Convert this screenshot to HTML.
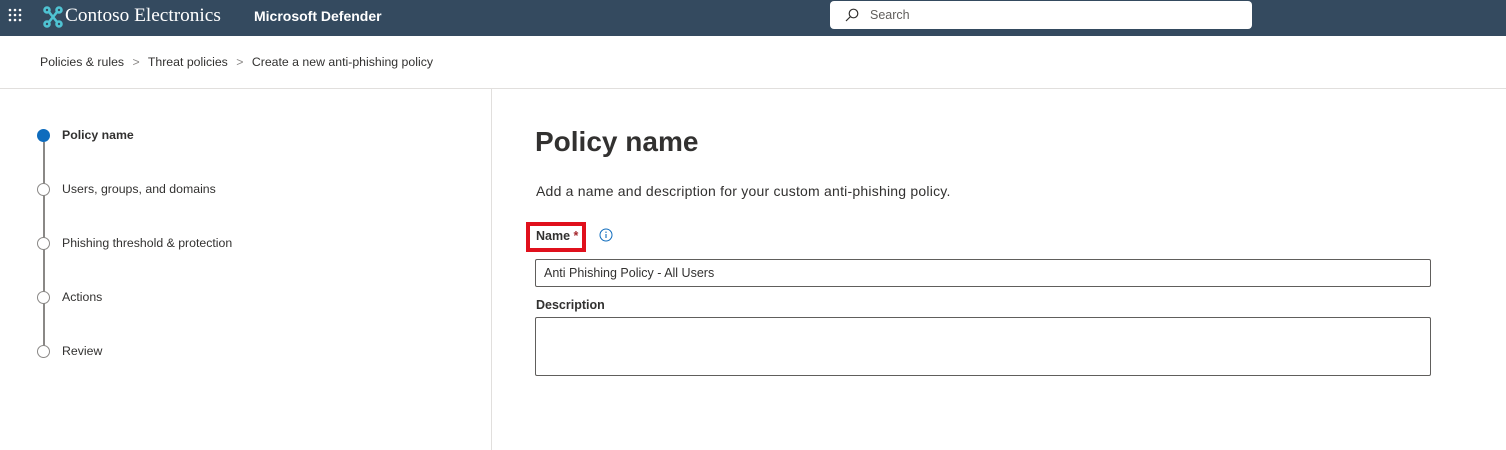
<!DOCTYPE html>
<html><head><style>
*{margin:0;padding:0;box-sizing:border-box}
body{width:1506px;height:450px;background:#fff;font-family:"Liberation Sans",sans-serif;color:#323130;position:relative;overflow:hidden}
.hdr{position:absolute;left:0;top:0;width:1506px;height:36px;background:#344a5f}
.abs{position:absolute}
.step{position:absolute;left:62px;font-size:12.3px;color:#323130}
.circ{position:absolute;left:37px;width:13px;height:13px;border:1.5px solid #8a8886;border-radius:50%;background:#fff}
</style></head><body>
<div class="hdr">
  <svg class="abs" style="left:8px;top:8px" width="14" height="14" viewBox="0 0 14 14" fill="#fff"><circle cx="2" cy="2" r="1.3"/><circle cx="7" cy="2" r="1.3"/><circle cx="12" cy="2" r="1.3"/><circle cx="2" cy="7" r="1.3"/><circle cx="7" cy="7" r="1.3"/><circle cx="12" cy="7" r="1.3"/><circle cx="2" cy="12" r="1.3"/><circle cx="7" cy="12" r="1.3"/><circle cx="12" cy="12" r="1.3"/></svg>
  <svg class="abs" style="left:43px;top:6px" width="20" height="22" viewBox="0 0 20 22"><g fill="none" stroke="#4fc3d3" stroke-width="2.6"><circle cx="4" cy="4" r="2.5"/><circle cx="16" cy="4" r="2.5"/><circle cx="4" cy="18" r="2.5"/><circle cx="16" cy="18" r="2.5"/><path d="M6 6 L14 16 M14 6 L6 16"/></g></svg>
  <div class="abs" style="left:65px;top:5px;font-family:'Liberation Serif',serif;font-size:19.3px;color:#fff">Contoso Electronics</div>
  <div class="abs" style="left:254px;top:8px;font-size:14px;font-weight:bold;color:#fff">Microsoft Defender</div>
  <div class="abs" style="left:830px;top:1px;width:422px;height:28px;background:#fff;border-radius:4px">
    <svg class="abs" style="left:15px;top:7px" width="14" height="14" viewBox="0 0 14 14" fill="none" stroke="#323130" stroke-width="1.2"><circle cx="8.5" cy="5.5" r="4.3"/><path d="M5.5 8.5 L1 13"/></svg>
    <div class="abs" style="left:40px;top:7px;font-size:12.5px;color:#605e5c">Search</div>
  </div>
</div>
<div class="abs" style="left:40px;top:55px;font-size:12.3px">Policies &amp; rules <span style="color:#8a8886;margin:0 5px">&gt;</span> Threat policies <span style="color:#8a8886;margin:0 5px">&gt;</span> Create a new anti-phishing policy</div>
<div class="abs" style="left:0;top:88px;width:1506px;height:1px;background:#e1dfdd"></div>
<div class="abs" style="left:491px;top:89px;width:1px;height:361px;background:#e1dfdd"></div>
<div class="abs" style="left:43px;top:142px;width:1.5px;height:210px;background:#8a8886"></div>
<div class="circ" style="top:129px;background:#0f6cbd;border-color:#0f6cbd"></div>
<div class="circ" style="top:183px"></div>
<div class="circ" style="top:237px"></div>
<div class="circ" style="top:291px"></div>
<div class="circ" style="top:345px"></div>
<div class="step" style="top:128px;font-weight:bold">Policy name</div>
<div class="step" style="top:182px">Users, groups, and domains</div>
<div class="step" style="top:236px">Phishing threshold &amp; protection</div>
<div class="step" style="top:290px">Actions</div>
<div class="step" style="top:344px">Review</div>
<div class="abs" style="left:535px;top:126px;font-size:28px;font-weight:bold;color:#323130">Policy name</div>
<div class="abs" style="left:536px;top:183px;font-size:14px;letter-spacing:0.22px">Add a name and description for your custom anti-phishing policy.</div>
<div class="abs" style="left:526px;top:222px;width:60px;height:30px;border:4px solid #e0101c"></div>
<div class="abs" style="left:536px;top:229px;font-size:12.5px;font-weight:bold">Name <span style="color:#a4262c">*</span></div>
<svg class="abs" style="left:599px;top:228px" width="14" height="14" viewBox="0 0 14 14"><circle cx="7" cy="7" r="6" fill="none" stroke="#0f6cbd" stroke-width="1"/><path d="M7 6v4" stroke="#0f6cbd" stroke-width="1.1"/><circle cx="7" cy="4.2" r=".7" fill="#0f6cbd"/></svg>
<div class="abs" style="left:535px;top:259px;width:896px;height:28px;border:1px solid #605e5c;border-radius:2px;font-size:12.5px;padding:6px 8px">Anti Phishing Policy - All Users</div>
<div class="abs" style="left:536px;top:298px;font-size:12.5px;font-weight:bold">Description</div>
<div class="abs" style="left:535px;top:317px;width:896px;height:59px;border:1px solid #605e5c;border-radius:2px"></div>
</body></html>
